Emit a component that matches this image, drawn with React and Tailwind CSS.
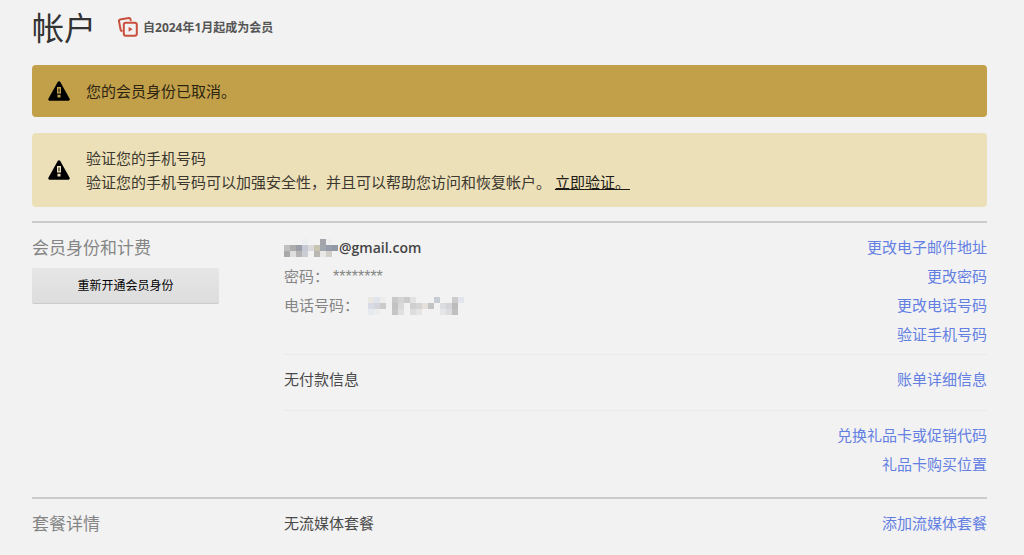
import React from "react";

const emailMask = [
  ["", "", "", "#eceef2", "", "", "#a2a6ac", "#eeeeee", ""],
  ["#bfc0c0", "#abacad", "#9b9ea6", "#c5cad5", "#dadadc", "#c9c4b2", "#a2a7ad", "#989daa", "#9398a6"],
  ["#a9a9aa", "#dedede", "#b4b4b4", "#cacdd4", "", "#b9b7b2", "#eae8e6", "#d2cfc9", ""],
];

const phoneMask = [
  ["#e9e6e3", "#e0e4ec", "#ededed", "", "#c9c9ca", "#d4d4d4", "#cbcbcc", "#e2e2e2", "", "", "", "#c7cbd4", "", "", "#cbcbcb", "#e2e5ec"],
  ["#d9dce4", "#d3d5da", "#cbcbcb", "", "#c2c2c3", "#d9d9db", "", "#cfcfcf", "#d4d4d4", "#e6e0da", "#c2c3c4", "", "#dadce0", "#d2d4d8", "#bcbcbd", ""],
  ["#e6e9ef", "#ededed", "", "", "#c5c5c6", "#dfdfdf", "", "#dddddd", "#e4e4e4", "", "", "", "#e6e6e8", "#dcdcde", "#c0c0c1", ""],
];

function Mask({ rows }) {
  return (
    <svg
      width={rows[0].length * 6}
      height={rows.length * 6}
      shapeRendering="crispEdges"
      aria-hidden="true"
    >
      {rows.map((row, y) =>
        row.map((color, x) =>
          color ? (
            <rect key={`${x}-${y}`} x={x * 6} y={y * 6} width="6" height="6" fill={color} />
          ) : null
        )
      )}
    </svg>
  );
}

function WarningIcon() {
  return (
    <svg className="size-[22px] shrink-0" viewBox="0 0 22 22" aria-hidden="true">
      <path
        fill="#000"
        fillRule="evenodd"
        d="M9.7 1.9a1.5 1.5 0 0 1 2.6 0l9.3 16.9a1.3 1.3 0 0 1-1.2 1.9H1.6a1.3 1.3 0 0 1-1.2-1.9L9.7 1.9ZM9 7h4v6.6H9V7Zm1.5 1.4v3.8h1V8.400h-1ZM9.500 14.800h3v2.700h-3v-2.700Z"
      />
    </svg>
  );
}

function MemberIcon() {
  return (
    <svg className="size-5 shrink-0" viewBox="0 0 20 20" fill="none" aria-hidden="true">
      <path
        stroke="#c9503c"
        strokeWidth="2"
        strokeLinecap="round"
        strokeLinejoin="round"
        d="m12.700 3.300-.3-1.200A1.300 1.300 0 0 0 10.900 1L1.900 2.600A1.300 1.300 0 0 0 1 4.100l1.600 8.600c.1.700.5 1.100 1.100 1.200"
      />
      <rect x="5.800" y="5.800" width="13" height="13" rx="2" stroke="#c9503c" strokeWidth="2" />
      <path fill="#c9503c" d="M10.600 9.800v5l4-2.500-4-2.500Z" />
    </svg>
  );
}

function SideLinks({ items }) {
  return (
    <ul className="shrink-0 text-right">
      {items.map((item) => (
        <li key={item}>
          <a href="#" className="text-[#647fe2] hover:underline">
            {item}
          </a>
        </li>
      ))}
    </ul>
  );
}

export default function App() {
  return (
    <main className="min-h-screen bg-[#f2f2f2] pl-8 pr-[37px] pt-2 font-['Open_Sans','Noto_Sans_CJK_SC',sans-serif] text-[15px] leading-[29px] text-[#4a4a4a]">
      <header className="flex items-center">
        <h1 className="text-[32px] leading-10 text-[#333]">帐户</h1>
        <div className="ml-[22px] flex items-center gap-[5px] pb-[2px]">
          <MemberIcon />
          <p className="text-[12px] font-bold text-[#555]">自2024年1月起成为会员</p>
        </div>
      </header>

      <div className="mt-[17px] flex items-center gap-4 rounded bg-[#c2a04a] px-4 py-[14px] leading-6 text-[#2c2410]">
        <WarningIcon />
        <p>您的会员身份已取消。</p>
      </div>

      <div className="mt-4 flex items-center gap-4 rounded bg-[#ece0b9] px-4 py-[13px] leading-6 text-[#3c382f]">
        <WarningIcon />
        <div>
          <p>验证您的手机号码</p>
          <p>
            验证您的手机号码可以加强安全性，并且可以帮助您访问和恢复帐户。{" "}
            <a href="#" className="text-[#1c1a14] underline">
              立即验证。
            </a>
          </p>
        </div>
      </div>

      <section className="mt-[14px] flex border-t-2 border-[#cccccc] pt-[10px] pb-[17px]">
        <div className="w-[252px] shrink-0">
          <h2 className="text-[17px] text-[#858585]">会员身份和计费</h2>
          <button
            type="button"
            className="mt-[6px] block h-9 w-[187px] rounded-xs border-b border-[#cccccc] bg-linear-to-b from-[#e6e6e6] to-[#dddddd] text-[12px] text-black"
          >
            重新开通会员身份
          </button>
        </div>

        <div className="flex-1">
          <div className="flex justify-between pb-[5px]">
            <ul className="text-[#858585]">
              <li className="flex items-center gap-px text-sm leading-[29px] font-semibold text-[#444]">
                <Mask rows={emailMask} />
                @gmail.com
              </li>
              <li className="flex gap-1">
                密码：
                <span className="font-['Liberation_Sans',sans-serif] text-[16px]">********</span>
              </li>
              <li className="flex items-center gap-[9px]">
                电话号码：
                <Mask rows={phoneMask} />
              </li>
            </ul>
            <SideLinks items={["更改电子邮件地址", "更改密码", "更改电话号码", "验证手机号码"]} />
          </div>

          <div className="flex justify-between border-t border-[#eaeaea] pt-[10px] pb-4">
            <p>无付款信息</p>
            <SideLinks items={["账单详细信息"]} />
          </div>

          <div className="flex justify-end border-t border-[#eaeaea] pt-[10px] pb-px">
            <SideLinks items={["兑换礼品卡或促销代码", "礼品卡购买位置"]} />
          </div>
        </div>
      </section>

      <section className="flex border-t-2 border-[#cccccc] pt-[10px]">
        <h2 className="w-[252px] shrink-0 text-[17px] text-[#858585]">套餐详情</h2>
        <p className="flex-1">无流媒体套餐</p>
        <SideLinks items={["添加流媒体套餐"]} />
      </section>
    </main>
  );
}
